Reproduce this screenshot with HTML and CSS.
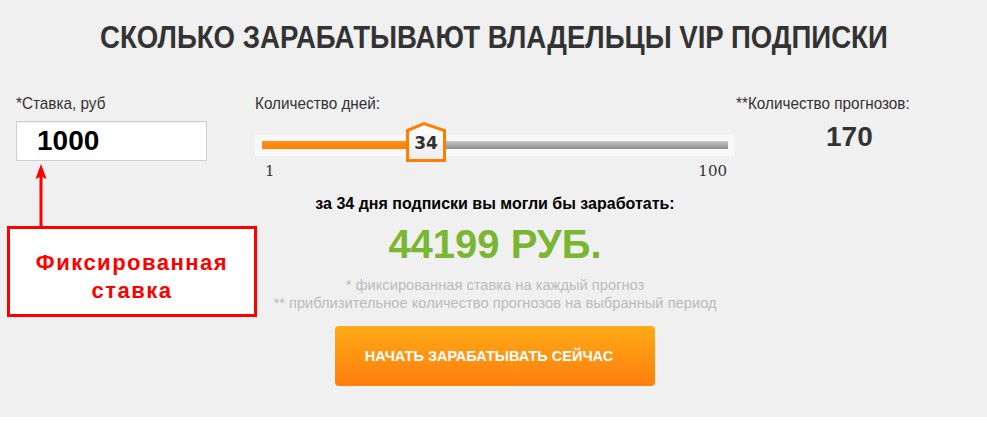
FILE: index.html
```html
<!DOCTYPE html>
<html lang="ru">
<head>
    <meta charset="UTF-8">
    <meta name="viewport" content="width=device-width, initial-scale=1.0">
    <title>Сколько зарабатывают владельцы VIP подписки</title>
    <link rel="stylesheet" href="styles.css">
</head>
<body>
    <div class="calc">
        <h1 class="calc-title"><span>СКОЛЬКО ЗАРАБАТЫВАЮТ ВЛАДЕЛЬЦЫ VIP ПОДПИСКИ</span></h1>

        <div class="calc-row">
            <!-- ставка -->
            <div class="col col-stake">
                <div class="label">*Ставка, руб</div>
                <div class="stake-input">1000</div>
                <svg class="note-arrow" width="14" height="62" viewBox="0 0 14 62">
                    <rect x="5.5" y="10" width="3" height="52" fill="#ff0000"/>
                    <polygon points="7,0 1.5,15 7,12.5 12.5,15" fill="#ff0000"/>
                </svg>
                <div class="note-box">Фиксированная<br>ставка</div>
            </div>

            <!-- дни -->
            <div class="col col-days">
                <div class="label">Количество дней:</div>
                <div class="slider">
                    <div class="slider-track">
                        <div class="slider-fill" style="width: 35.2%"></div>
                        <div class="slider-handle" style="left: 35.2%">
                            <svg width="40" height="40" viewBox="0 0 40 40">
                                <defs>
                                    <linearGradient id="hg" x1="0" y1="0" x2="0" y2="1">
                                        <stop offset="0" stop-color="#ffffff"/>
                                        <stop offset="1" stop-color="#ededed"/>
                                    </linearGradient>
                                </defs>
                                <polygon points="1.5,8.5 18,1.7 38.5,8.5 38.5,38.5 1.5,38.5" fill="url(#hg)" stroke="#ff7e00" stroke-width="3" stroke-linejoin="miter"/>
                            </svg>
                            <span class="handle-value">34</span>
                        </div>
                    </div>
                </div>
                <div class="slider-scale">
                    <span>1</span>
                    <span>100</span>
                </div>

                <div class="result">
                    <p class="result-text">за 34 дня подписки вы могли бы заработать:</p>
                    <p class="result-sum">44199 РУБ.</p>
                    <p class="result-notes">* фиксированная ставка на каждый прогноз<br>** приблизительное количество прогнозов на выбранный период</p>
                    <a class="btn-start" href="#">НАЧАТЬ ЗАРАБАТЫВАТЬ СЕЙЧАС</a>
                </div>
            </div>

            <!-- прогнозы -->
            <div class="col col-count">
                <div class="label">**Количество прогнозов:</div>
                <div class="count-value">170</div>
            </div>
        </div>
    </div>
</body>
</html>
```

FILE: styles.css
```css
body {
    margin: 0;
    background: #fff;
    font-family: "Liberation Sans", Arial, sans-serif;
    color: #333;
}
.calc {
    background: #f0f0f0;
    padding: 18px 0 31px;
}
.calc-title {
    margin: 0;
    text-align: center;
    font-size: 32px;
    line-height: 38px;
    font-weight: 700;
    color: #333;
}
/* narrow look of the heading */
.calc-title span {
    display: inline-block;
    transform: scaleX(0.862);
}
.calc-row {
    display: flex;
    margin-top: 39px;
    padding-left: 16px;
}
.label {
    font-size: 17px;
    line-height: 18px;
    color: #333;
    white-space: nowrap;
    transform: scaleX(0.9);
    transform-origin: left center;
}

/* left column */
.col-stake {
    width: 239px;
    display: flex;
    flex-direction: column;
    align-items: flex-start;
}
.stake-input {
    box-sizing: border-box;
    width: 191px;
    height: 40px;
    margin-top: 8px;
    padding-left: 20px;
    background: #fff;
    border: 1px solid #cfcfcf;
    box-shadow: inset 0 1px 2px rgba(0, 0, 0, 0.06);
    font-size: 28px;
    line-height: 38px;
    font-weight: 700;
    color: #000;
}
.note-arrow {
    display: block;
    margin: 3px 0 0 18px;
}
.note-box {
    box-sizing: border-box;
    width: 250px;
    height: 91px;
    margin-left: -9px;
    padding-top: 20px;
    background: #fff;
    border: 3px solid #ff0000;
    text-align: center;
    font-size: 22px;
    line-height: 28px;
    font-weight: 700;
    letter-spacing: 1.5px;
    color: #ff0000;
}

/* middle column */
.col-days {
    width: 480px;
}
.slider {
    margin-top: 22px;
    height: 21px;
    box-sizing: border-box;
    padding: 6px 7px 7px;
    background: #f8f8f8;
}
.slider-track {
    position: relative;
    height: 8px;
    background: linear-gradient(#c6c6c6, #8e8e8e);
}
.slider-fill {
    height: 8px;
    background: linear-gradient(#ff9220, #ff8000);
}
.slider-handle {
    position: absolute;
    top: -19px;
    width: 40px;
    height: 40px;
    transform: translateX(-50%);
}
.slider-handle svg {
    display: block;
}
.handle-value {
    position: absolute;
    left: 0;
    right: 0;
    top: 11px;
    text-align: center;
    font-family: "DejaVu Sans", Verdana, sans-serif;
    font-size: 17px;
    line-height: 20px;
    font-weight: 700;
    color: #333;
}
.slider-scale {
    display: flex;
    justify-content: space-between;
    margin-top: 6px;
    padding: 0 8px 0 10px;
    font-family: "DejaVu Serif", serif;
    font-size: 15px;
    line-height: 18px;
    color: #333;
}
.result {
    text-align: center;
}
.result p {
    margin: 0;
}
.result-text {
    margin-top: 15px !important;
    font-size: 16px;
    line-height: 18px;
    font-weight: 700;
    color: #000;
}
.result-sum {
    margin-top: 8px !important;
    font-size: 40px;
    line-height: 46px;
    font-weight: 700;
    color: #7ab632;
}
.result-notes {
    margin-top: 9px !important;
    font-size: 14.7px;
    line-height: 18px;
    color: #bbb;
}
.btn-start {
    box-sizing: border-box;
    display: flex;
    align-items: center;
    justify-content: center;
    width: 320px;
    height: 60px;
    margin: 14px auto 0;
    padding-right: 12px;
    border-radius: 4px;
    background: linear-gradient(#ffab17, #ff7e0d);
    color: #fff;
    text-decoration: none;
    font-size: 14.5px;
    font-weight: 700;
}

/* right column */
.col-count {
    margin-left: 1px;
}
.count-value {
    margin: 8px 0 0 90px;
    font-size: 28px;
    line-height: 32px;
    font-weight: 700;
    color: #333;
}
```
